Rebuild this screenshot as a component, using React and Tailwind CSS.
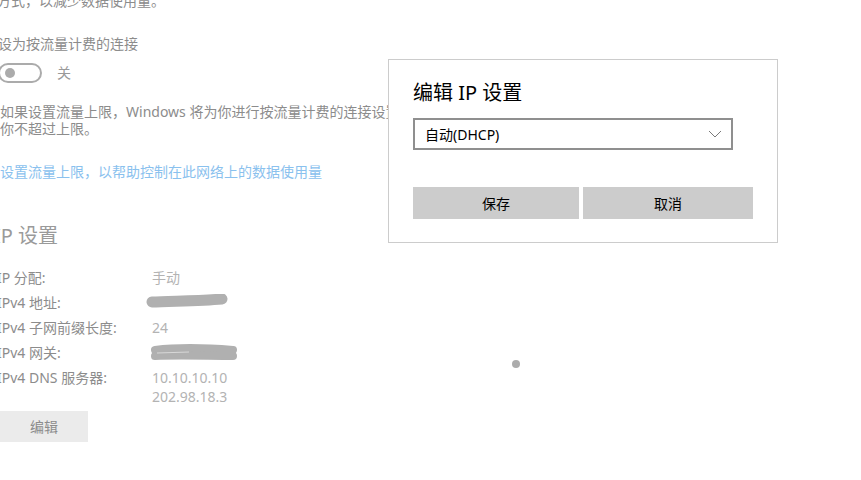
import React from "react";

const FONT = "font-['Segoe_UI','Noto_Sans','Noto_Sans_CJK_SC',sans-serif]";

function Scribble({ wide }) {
  if (wide) {
    return (
      <svg width="90" height="18" viewBox="0 0 90 18" className="block">
        <path d="M6 6 C30 3, 60 4, 84 6" stroke="#b0b0b0" strokeWidth="8" strokeLinecap="round" fill="none" />
        <path d="M6 12 C30 11, 60 12, 84 12" stroke="#b0b0b0" strokeWidth="8" strokeLinecap="round" fill="none" />
        <path d="M8 9 L40 8" stroke="#d8d8d8" strokeWidth="1" fill="none" />
      </svg>
    );
  }
  return (
    <svg width="84" height="16" viewBox="0 0 84 16" className="block">
      <path d="M7 8 C25 7, 55 7, 77 5" stroke="#b0b0b0" strokeWidth="11" strokeLinecap="round" fill="none" />
    </svg>
  );
}

function InfoRow({ label, children }) {
  return (
    <div className="grid grid-cols-[155px_1fr] leading-[20px] min-h-[25px]">
      <div className="text-[#8c8c8c]">{label}</div>
      <div className="text-[#b3b3b3]">{children}</div>
    </div>
  );
}

export default function App() {
  return (
    <div className={`relative w-[861px] h-[480px] overflow-hidden bg-white text-[14px] ${FONT}`}>
      <div className="flex flex-col ml-[-3px]">
        <div className="-mt-[9px] leading-[20px] text-[#8c8c8c]">方式，以减少数据使用量。</div>

        <div className="mt-[23px] leading-[20px] text-[#8c8c8c] ml-[1px]">设为按流量计费的连接</div>

        <div className="mt-[9px] flex items-center gap-[15px] ml-[1px]">
          <div className="w-[44px] h-[20px] rounded-full border-2 border-[#ababab] flex items-center pl-[5px]">
            <div className="w-[10px] h-[10px] rounded-full bg-[#ababab]" />
          </div>
          <span className="text-[#999] leading-[20px]">关</span>
        </div>

        <div className="mt-[20px] leading-[17px] text-[#8c8c8c] ml-[3px]">
          <div className="whitespace-nowrap">如果设置流量上限，Windows 将为你进行按流量计费的连接设置，以确保</div>
          <div>你不超过上限。</div>
        </div>

        <div className="mt-[25px] leading-[20px] text-[#8ac1ee] ml-[3px]">
          设置流量上限，以帮助控制在此网络上的数据使用量
        </div>

        <div className="mt-[40px] text-[20px] leading-[28px] text-[#9a9a9a] ml-[-3px]">IP 设置</div>

        <div className="mt-[18px] flex flex-col">
          <InfoRow label="IP 分配:">手动</InfoRow>
          <InfoRow label="IPv4 地址:">
            <div className="ml-[-7px] mt-[1px]"><Scribble /></div>
          </InfoRow>
          <InfoRow label="IPv4 子网前缀长度:">24</InfoRow>
          <InfoRow label="IPv4 网关:">
            <div className="ml-[-3px] mt-[1px]"><Scribble wide /></div>
          </InfoRow>
          <InfoRow label="IPv4 DNS 服务器:">
            <div className="leading-[19px]">
              <div>10.10.10.10</div>
              <div>202.98.18.3</div>
            </div>
          </InfoRow>
        </div>

        <div className="mt-[5px] ml-[3px] w-[88px] h-[31px] bg-[#ebebeb] flex items-center justify-center text-[#8c8c8c]">
          编辑
        </div>
      </div>

      <div className="absolute left-[516px] top-[364px] -translate-x-1/2 -translate-y-1/2 w-[8px] h-[8px] rounded-full bg-[#acacac]" />

      <div className="absolute left-[388px] top-[59px] w-[390px] h-[184px] bg-white border border-[#cccccc] pl-[24px]">
        <div className="mt-[19px] text-[20px] leading-[28px] text-black">编辑 IP 设置</div>
        <div className="mt-[11px] w-[320px] h-[32px] border-2 border-[#8f8f8f] flex items-center justify-between pl-[10px] pr-[8px] text-black">
          <span>自动(DHCP)</span>
          <svg width="16" height="10" viewBox="0 0 16 10">
            <path d="M2 2 L8 8 L14 2" stroke="#7a7a7a" strokeWidth="1" fill="none" />
          </svg>
        </div>
        <div className="mt-[37px] flex gap-[4px]">
          <div className="w-[166px] h-[32px] bg-[#cccccc] flex items-center justify-center text-black">保存</div>
          <div className="w-[170px] h-[32px] bg-[#cccccc] flex items-center justify-center text-black">取消</div>
        </div>
      </div>
    </div>
  );
}
